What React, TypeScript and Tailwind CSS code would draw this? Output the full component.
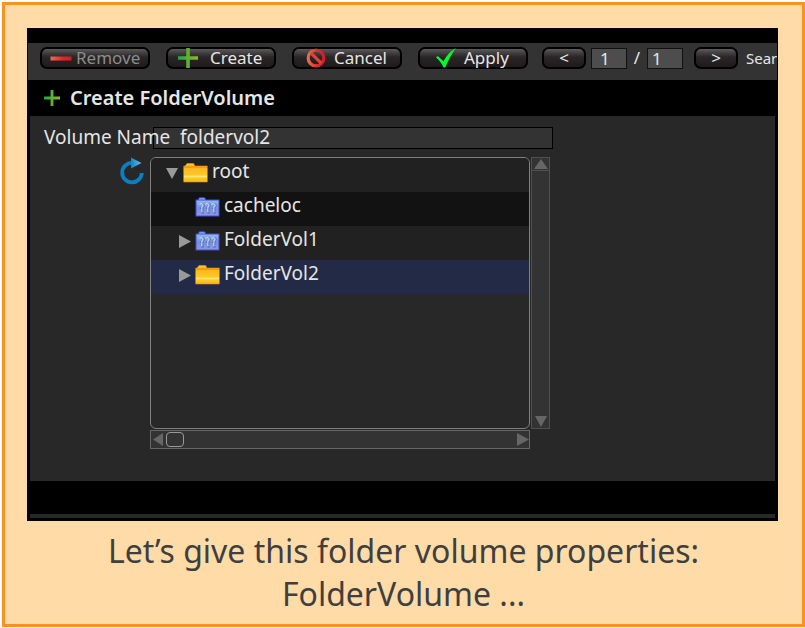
/**
 * App.tsx - "Create FolderVolume" tutorial card
 *
 * A framed slide: the volume editor on top, the caption below it
 */

import React from 'react';
import clsx from 'clsx';

type FolderKind = 'plain' | 'volume';

interface TreeNode {
    name: string;
    kind: FolderKind;
    level: number;
    open?: boolean;
    leaf?: boolean;
    selected?: boolean;
}

const nodes: TreeNode[] = [
    { name: 'root', kind: 'plain', level: 0, open: true },
    { name: 'cacheloc', kind: 'volume', level: 1, leaf: true },
    { name: 'FolderVol1', kind: 'volume', level: 1 },
    { name: 'FolderVol2', kind: 'plain', level: 1, selected: true },
];

/* ---------- icons ---------- */

const MinusIcon = () => (
    <svg width="22" height="20" viewBox="0 0 22 20" aria-hidden="true">
        <defs>
            <linearGradient id="minus" x1="0" x2="1">
                <stop offset="0" stopColor="#ef6a50" />
                <stop offset="0.6" stopColor="#e0262b" />
                <stop offset="1" stopColor="#cf1f26" />
            </linearGradient>
        </defs>
        <rect x="0.5" y="8.5" width="21" height="4" fill="url(#minus)" />
    </svg>
);

const PlusIcon = ({ size, id }: { size: number; id: string }) => (
    <svg width={size} height={size} viewBox="0 0 20 20" aria-hidden="true">
        <defs>
            <linearGradient id={id} x1="0" x2="1">
                <stop offset="0" stopColor="#22a648" />
                <stop offset="0.5" stopColor="#5fb030" />
                <stop offset="1" stopColor="#8ab82c" />
            </linearGradient>
        </defs>
        <path d="M8.2 0h3.600v8.200H20v3.600h-8.200V20H8.200v-8.200H0V8.200h8.200z" fill={`url(#${id})`} />
    </svg>
);

const BanIcon = () => (
    <svg width="20" height="20" viewBox="0 0 20 20" fill="none" aria-hidden="true">
        <defs>
            <linearGradient id="ban" x1="0" x2="1">
                <stop offset="0" stopColor="#ef6a50" />
                <stop offset="0.6" stopColor="#e02a2d" />
                <stop offset="1" stopColor="#d01f27" />
            </linearGradient>
        </defs>
        <circle cx="10" cy="10" r="7.800" stroke="url(#ban)" strokeWidth="3.200" />
        <path d="M4.8 4.8l10.4 10.4" stroke="#e2403b" strokeWidth="3.200" />
    </svg>
);

const CheckIcon = () => (
    <svg width="20" height="20" viewBox="0 0 20 20" aria-hidden="true">
        <path d="M0 9.600l1.800-1.600 5.600 5.200C10.600 7.600 14.500 3 20 0 15.500 6 12 12.500 9.200 19.600H7.600C5.800 15.600 3.200 12.200 0 9.600z" fill="#00ff2a" />
    </svg>
);

const RefreshIcon = () => (
    <svg width="26" height="28" viewBox="0 0 26 28" fill="none" aria-hidden="true">
        <defs>
            <linearGradient id="refresh-head" x1="0" x2="1">
                <stop offset="0" stopColor="#1583c6" />
                <stop offset="1" stopColor="#6bb9e6" />
            </linearGradient>
        </defs>
        <path d="M13 5.800A9.800 9.800 0 1 0 22.800 16" stroke="#0a7fc4" strokeWidth="3.800" />
        <path d="M12 0.500l10.500 5.500L12 11.500z" fill="url(#refresh-head)" />
    </svg>
);

const FolderIcon = () => (
    <svg width="25" height="20" viewBox="0 0 25 20" aria-hidden="true">
        <defs>
            <linearGradient id="folder" x1="0" y1="0" x2="0" y2="1">
                <stop offset="0" stopColor="#fbb71d" />
                <stop offset="0.5" stopColor="#fdc72a" />
                <stop offset="0.62" stopColor="#ffe873" />
                <stop offset="0.75" stopColor="#f9cb1c" />
                <stop offset="1" stopColor="#f8b61c" />
            </linearGradient>
        </defs>
        <path d="M2.500 4.500V2.500L4 0.500h6.500l1 1.500v2.500z" fill="#f7c23c" stroke="#e79a17" strokeWidth="0.600" />
        <rect x="0.500" y="2.800" width="24" height="16.400" rx="0.500" fill="#f59b14" />
        <rect x="0.800" y="5" width="23.400" height="13.600" fill="url(#folder)" />
    </svg>
);

const VolumeIcon = () => (
    <svg width="25" height="20" viewBox="0 0 25 20" fill="none" aria-hidden="true">
        <defs>
            <linearGradient id="volume" x1="0" y1="0" x2="0" y2="1">
                <stop offset="0" stopColor="#8fbdf0" />
                <stop offset="0.5" stopColor="#7291de" />
                <stop offset="1" stopColor="#8d9be0" />
            </linearGradient>
        </defs>
        <path d="M3.500 3.500V2L4.500 0.800h5L10.500 2v1.500z" fill="#8fc0ee" stroke="#3d3fe0" />
        <rect x="1" y="3" width="23" height="16" fill="url(#volume)" stroke="#4549e0" />
        {[5, 11, 17].map((x) => (
            <g key={x} transform={`translate(${x} 6)`}>
                <path d="M0.500 1.500q1.500-1.600 3-0.300t-0.700 3.300v4M0 5l2 0.500M1.500 10h2.500" stroke="#5666b4" strokeWidth="1.200" />
                <path d="M-0.300 2q1.300-2.200 2.800-0.800t-0.700 3.300v4.500" stroke="#c4d2f6" strokeWidth="1.200" />
            </g>
        ))}
    </svg>
);

const Triangle = ({ dir, className }: { dir: 'up' | 'down' | 'left' | 'right'; className?: string }) => {
    const paths = {
        up: 'M0 11L7 1l7 10z',
        down: 'M1 1h12L7 12z',
        left: 'M11 0v13L1 6.500z',
        right: 'M2 0v13l12-6.500z',
    };
    return (
        <svg width="14" height="13" viewBox="0 0 14 13" fill="currentColor" className={className} aria-hidden="true">
            <path d={paths[dir]} />
        </svg>
    );
};

/* ---------- toolbar ---------- */

const glossy =
    'flex h-[22px] shrink-0 items-center rounded-[7px] border-2 border-black bg-linear-to-b from-[#5c5a5b] via-[#2a2627] via-45% to-[#1f1b1c] text-[17px]/5 text-[#e6e6e6]';

interface ToolButtonProps {
    icon: React.ReactNode;
    label: string;
    disabled?: boolean;
    className?: string;
}

const ToolButton: React.FC<ToolButtonProps> = ({ icon, label, disabled, className }) => (
    <button type="button" disabled={disabled} className={clsx(glossy, 'w-[110px] disabled:text-[#8c8c8c]', className)}>
        {icon}
        <span>{label}</span>
    </button>
);

const Toolbar = () => (
    <div className="flex h-[37px] items-start overflow-hidden bg-[#333333] pt-1 pl-3">
        <div className="flex shrink-0 gap-4">
            <ToolButton icon={<MinusIcon />} label="Remove" disabled className="gap-1 pl-2" />
            <ToolButton icon={<PlusIcon size={20} id="plus-create" />} label="Create" className="gap-3 pl-[10px]" />
            <ToolButton icon={<BanIcon />} label="Cancel" className="gap-2 pl-3" />
            <ToolButton icon={<CheckIcon />} label="Apply" className="gap-2 pl-4" />
        </div>
        <div className="ml-[14px] flex shrink-0 items-center text-[17px]/5 text-[#e6e6e6]">
            <button type="button" aria-label="Previous page" className={clsx(glossy, 'w-11 justify-center')}>&lt;</button>
            <input aria-label="Page" defaultValue="1" className="ml-[5px] h-[21px] w-9 border border-[#111111] bg-[#4d4d4d] pl-2" />
            <span className="w-5 text-center">/</span>
            <input aria-label="Page count" defaultValue="1" className="h-[21px] w-9 border border-[#111111] bg-[#4d4d4d] pl-1" />
            <button type="button" aria-label="Next page" className={clsx(glossy, 'ml-[11px] w-11 justify-center')}>&gt;</button>
            <span className="ml-2 text-[15px]/5">Sear</span>
        </div>
    </div>
);

/* ---------- folder tree ---------- */

const TreeRow = ({ node }: { node: TreeNode }) => (
    <li
        className={clsx(
            'flex h-[34px] items-center pb-1',
            node.level === 0 ? 'pl-[14px]' : 'pl-[26px]',
            node.selected ? 'bg-[#232a45]' : 'odd:bg-[#212121] even:bg-[#121212]'
        )}
    >
        {node.leaf ? (
            <span className="w-[18px]" />
        ) : (
            <button type="button" aria-label={`Toggle ${node.name}`} className="w-[18px] text-[#999999]">
                <Triangle dir={node.open ? 'down' : 'right'} />
            </button>
        )}
        {node.kind === 'plain' ? <FolderIcon /> : <VolumeIcon />}
        <span className="ml-1 pb-1">{node.name}</span>
    </li>
);

const FolderTree = () => (
    <div className="grid w-[400px] grid-cols-[380px_19px] gap-x-px">
        <ul className="h-[272px] overflow-hidden rounded-md border border-[#808080] text-[19px]/6">
            {nodes.map((node) => (
                <TreeRow key={node.name} node={node} />
            ))}
        </ul>
        <div className="flex flex-col justify-between border border-[#505050] bg-[#333333] text-[#666666]">
            <button type="button" aria-label="Scroll up" className="flex h-[13px] justify-center border-b border-[#505050]">
                <Triangle dir="up" />
            </button>
            <button type="button" aria-label="Scroll down" className="flex justify-center">
                <Triangle dir="down" />
            </button>
        </div>
        <div className="mt-px flex h-[19px] items-center border border-[#666666] bg-[#333333] text-[#666666]">
            <button type="button" aria-label="Scroll left" className="pl-px">
                <Triangle dir="left" />
            </button>
            <div className="h-[15px] w-[18px] rounded-sm border border-[#999999]" />
            <button type="button" aria-label="Scroll right" className="ml-auto">
                <Triangle dir="right" />
            </button>
        </div>
    </div>
);

/* ---------- editor window ---------- */

const VolumeEditor = () => (
    <section className="overflow-hidden border-x border-black bg-black pt-[15px] pb-[3px] text-[#e6e6e6]">
        <Toolbar />
        <h1 className="flex h-9 items-center gap-[10px] pl-4 text-xl font-semibold">
            <PlusIcon size={16} id="plus-title" />
            Create FolderVolume
        </h1>
        <div className="mx-[2px] bg-[#282828] pt-[11px] pb-8">
            <div className="flex h-[22px] items-center text-[19px]/5">
                <label htmlFor="volume-name" className="relative z-10 w-[123px] shrink-0 pb-[2px] pl-[14px] whitespace-nowrap">
                    Volume Name
                </label>
                <input
                    id="volume-name"
                    defaultValue="foldervol2"
                    className="h-[22px] w-[400px] border border-black bg-[#333333] pb-[2px] pl-[26px]"
                />
            </div>
            <div className="mt-2 flex">
                <button type="button" aria-label="Refresh" className="flex w-[120px] shrink-0 justify-end self-start pr-[5px]">
                    <RefreshIcon />
                </button>
                <FolderTree />
            </div>
        </div>
        <div className="mx-[2px] mt-[33px] h-1 bg-[#282828]" />
    </section>
);

export default function App() {
    return (
        <main className="min-h-screen bg-white p-[2px] pr-0 pb-px font-['Noto_Sans','Open_Sans',sans-serif]">
            <div className="min-h-[625px] border-3 border-[#f7931e] bg-[#ffdba7] px-[22px] pt-[23px] pb-2">
                <div className="pr-[2px]">
                    <VolumeEditor />
                </div>
                <p className="mt-2 text-center text-[32px]/[43px] text-[#3f3f3f]">
                    Let’s give this folder volume properties:
                    <br />
                    FolderVolume ...
                </p>
            </div>
        </main>
    );
}
